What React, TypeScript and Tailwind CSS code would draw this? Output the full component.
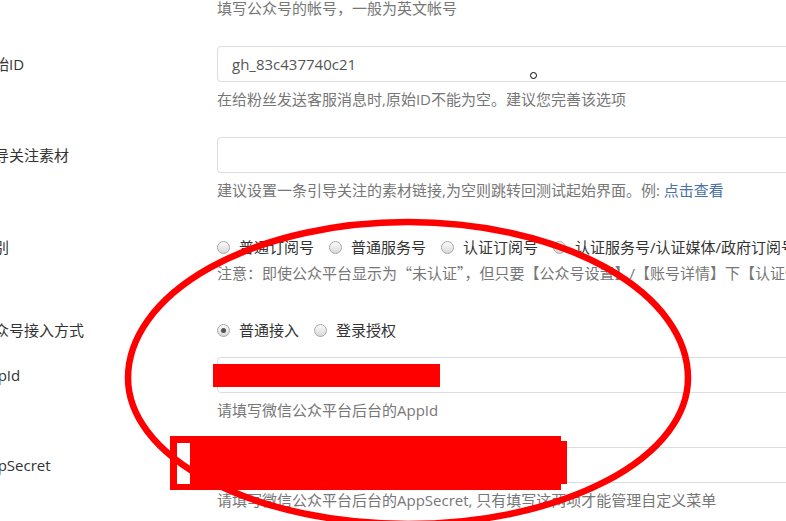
import React from "react";

const font = "font-['Open_Sans','Noto_Sans_CJK_SC',sans-serif]";

function Radio({ label, checked }: { label: string; checked?: boolean }) {
  return (
    <label className="flex items-center mr-[15px] whitespace-nowrap">
      <span className="w-[13px] h-[13px] rounded-full border border-[#a9a9a9] bg-gradient-to-b from-[#fbfbfb] to-[#d9d9d9] flex items-center justify-center shrink-0">
        {checked && <span className="w-[5px] h-[5px] rounded-full bg-[#555]" />}
      </span>
      <span className="ml-[9px] text-[#333]">{label}</span>
    </label>
  );
}

function Label({ text, h = "h-9" }: { text: string; h?: string }) {
  return (
    <div className={`w-[238px] shrink-0 flex items-center text-[#333] whitespace-nowrap ${h}`}>
      {text}
    </div>
  );
}

function Help({ children }: { children: React.ReactNode }) {
  return <p className="mt-[6px] leading-[22px] text-[#777] whitespace-nowrap">{children}</p>;
}

export default function App() {
  return (
    <div className={`relative w-[786px] h-[521px] overflow-hidden bg-white text-[15px] leading-[22px] ${font}`}>
      <div className="-ml-[21px] w-[1200px]">
        {/* account help (top of page cut off) */}
        <div className="flex -mt-[3px]">
          <div className="w-[238px] shrink-0" />
          <p className="leading-[22px] text-[#777]">填写公众号的帐号，一般为英文帐号</p>
        </div>

        {/* original id */}
        <div className="flex mt-[27px]">
          <Label text="原始ID" />
          <div className="flex-1">
            <div className="h-9 border border-[#ddd] rounded-[4px] pl-[14px] flex items-center text-[#555]">
              gh_83c437740c21
            </div>
            <Help>在给粉丝发送客服消息时,原始ID不能为空。建议您完善该选项</Help>
          </div>
        </div>

        {/* subscribe material */}
        <div className="flex mt-[27px]">
          <Label text="引导关注素材" />
          <div className="flex-1">
            <div className="h-9 border border-[#ddd] rounded-[4px]" />
            <Help>
              建议设置一条引导关注的素材链接,为空则跳转回测试起始界面。例: <span className="text-[#4a72a8]">点击查看</span>
            </Help>
          </div>
        </div>

        {/* type */}
        <div className="flex mt-[31px]">
          <Label text="类别" h="h-[30px]" />
          <div className="flex-1">
            <div className="h-[30px] flex items-center">
              <Radio label="普通订阅号" />
              <Radio label="普通服务号" />
              <Radio label="认证订阅号" />
              <Radio label="认证服务号/认证媒体/政府订阅号" />
            </div>
            <p className="leading-[22px] text-[#777] whitespace-nowrap">
              注意：即使公众平台显示为
              <span className="font-['Noto_Sans_CJK_SC',sans-serif]">“未认证”，</span>
              但只要【公众号设置】/【账号详情】下【认证情况】显示资质审核通过，即可认为是认证号
            </p>
          </div>
        </div>

        {/* access mode */}
        <div className="flex mt-[31px]">
          <Label text="公众号接入方式" h="h-[30px]" />
          <div className="h-[30px] flex items-center">
            <Radio label="普通接入" checked />
            <Radio label="登录授权" />
          </div>
        </div>

        {/* app id */}
        <div className="flex mt-[12px]">
          <Label text="AppId" />
          <div className="flex-1">
            <div className="h-9 border border-[#ddd] rounded-[4px]" />
            <Help>请填写微信公众平台后台的AppId</Help>
          </div>
        </div>

        {/* app secret */}
        <div className="flex mt-[26px]">
          <Label text="AppSecret" />
          <div className="flex-1">
            <div className="h-9 border border-[#ddd] rounded-[4px]" />
            <Help>请填写微信公众平台后台的AppSecret, 只有填写这两项才能管理自定义菜单</Help>
          </div>
        </div>
      </div>

      {/* redactions */}
      <div className="absolute left-[213px] top-[364px] w-[227px] h-[23px] bg-[#ff0000]" />
      <div className="absolute left-[170px] top-[436px] w-[391px] h-[54px] bg-[#ff0000]" />
      <div className="absolute left-[561px] top-[441px] w-[6px] h-[43px] bg-[#ff0000]" />
      <div className="absolute left-[177px] top-[443px] w-[13px] h-[41px] bg-white" />

      {/* hand drawn ellipse */}
      <svg className="absolute left-0 top-0" width="786" height="521" viewBox="0 0 786 521">
        <path
          d="M128 378 A280 156 0 0 1 688 378 A280 146 0 0 1 128 378 Z"
          fill="none"
          stroke="#ff0000"
          strokeWidth="6.5"
        />
      </svg>

      {/* mouse cursor */}
      <div className="absolute left-[530px] top-[72px] w-[7px] h-[7px] rounded-full border border-black bg-white" />
    </div>
  );
}
